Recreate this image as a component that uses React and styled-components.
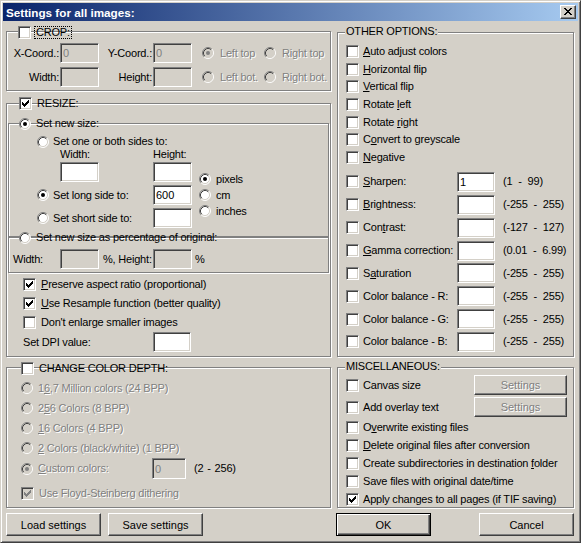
import React from 'react';
import styled, { createGlobalStyle, css } from 'styled-components';

const FACE = '#D4D0C8';
const CHECK_PATH =
  'M3 5h1v3h-1zM4 6h1v3h-1zM5 7h1v3h-1zM6 6h1v3h-1zM7 5h1v3h-1zM8 4h1v3h-1zM9 3h1v3h-1z';
const X_PATH =
  'M0 0h2v1h-2zM6 0h2v1h-2zM1 1h2v1h-2zM5 1h2v1h-2zM2 2h4v1h-4zM3 3h2v1h-2zM2 4h4v1h-4zM1 5h2v1h-2zM5 5h2v1h-2zM0 6h2v1h-2zM6 6h2v1h-2z';

const Global = createGlobalStyle`
  html, body { margin: 0; padding: 0; background: ${FACE}; }
  body {
    font-family: "Liberation Sans", Arial, sans-serif;
    font-size: 11px;
    letter-spacing: -0.2px;
    color: #000;
  }
  * { box-sizing: border-box; }
`;

const Window = styled.div`
  width: 581px;
  height: 543px;
  background: ${FACE};
  border: 1px solid;
  border-color: ${FACE} #404040 #404040 ${FACE};
  box-shadow: inset 1px 1px #fff, inset -1px -1px #808080;
  padding: 2px;
  display: flex;
  flex-direction: column;
`;

const TitleBar = styled.div`
  height: 18px;
  flex: none;
  background: linear-gradient(to right, #0a246a, #a6caf0);
  display: flex;
  align-items: center;
  justify-content: space-between;
  padding: 0 2px 0 3px;
  color: #fff;
  font-weight: bold;
  font-size: 11.7px;
  letter-spacing: 0;
  white-space: nowrap;
`;

const CloseButton = styled.div`
  width: 16px;
  height: 14px;
  background: ${FACE};
  border: 1px solid;
  border-color: #fff #404040 #404040 #fff;
  box-shadow: inset -1px -1px #808080;
  display: flex;
  align-items: center;
  justify-content: center;
  padding: 0 1px 1px 0;
`;

const Body = styled.div`
  flex: 1;
  display: grid;
  grid-template-columns: 325px 237px;
  column-gap: 6px;
  padding-left: 3px;
`;

const Column = styled.div`
  display: flex;
  flex-direction: column;
`;

const Group = styled.div`
  position: relative;
  flex: none;
  height: ${(p) => p.$h}px;
  margin-top: ${(p) => p.$mt || 0}px;
  margin-left: ${(p) => p.$mx || 0}px;
  margin-right: ${(p) => p.$mx || 0}px;
  border: 1px solid #808080;
  box-shadow: inset 1px 1px #fff, 1px 1px #fff;
`;

const Header = styled.div`
  position: absolute;
  left: ${(p) => p.$left}px;
  top: ${(p) => p.$top}px;
  display: flex;
`;

const Legend = styled.div`
  position: absolute;
  left: 7px;
  top: -8px;
  padding: 0 1px;
  background: ${FACE};
  line-height: 13px;
  white-space: nowrap;
`;

const OptionRow = styled.div`
  display: flex;
  align-items: center;
  gap: ${(p) => p.$gap}px;
  height: ${(p) => p.$h || 13}px;
  flex: none;
`;

const Text = styled.span`
  white-space: pre;
  line-height: 13px;
  flex: none;
  word-spacing: ${(p) => (p.$ws ? `${p.$ws}px` : 'normal')};
  width: ${(p) => (p.$w ? `${p.$w}px` : 'auto')};
  text-align: ${(p) => (p.$right ? 'right' : 'left')};
  padding-right: ${(p) => (p.$right ? '1px' : '0')};
  padding-left: ${(p) => p.$pl || 0}px;
  margin-left: ${(p) => p.$ml || 0}px;
  color: ${(p) => (p.$disabled ? '#808080' : '#000')};
  text-shadow: ${(p) => (p.$disabled ? '1px 1px 0 #fff' : 'none')};
  ${(p) =>
    p.$focus &&
    css`
      border: 1px dotted #000;
      line-height: 10px;
      padding: 0 1px 1px;
      margin-left: -2px;
    `}
`;

const CheckBox = styled.span`
  width: 13px;
  height: 13px;
  flex: none;
  display: block;
  background: ${(p) => (p.$disabled ? FACE : '#fff')};
  border: 1px solid;
  border-color: #808080 #fff #fff #808080;
  box-shadow: inset 1px 1px #404040, inset -1px -1px ${FACE};
`;

const Glyph = styled.svg`
  display: block;
  flex: none;
`;

const Field = styled.input`
  width: ${(p) => p.$w}px;
  height: ${(p) => p.$h || 20}px;
  flex: none;
  margin: 0;
  font: inherit;
  font-size: 11px;
  outline: none;
  background: ${(p) => (p.$disabled ? FACE : '#fff')};
  color: ${(p) => (p.$disabled ? '#808080' : '#000')};
  border: 1px solid;
  border-color: #808080 #fff #fff #808080;
  box-shadow: inset 1px 1px #404040, inset -1px -1px ${FACE};
  padding: 0 2px;
`;

const Button = styled.button`
  width: ${(p) => p.$w}px;
  height: ${(p) => p.$h}px;
  flex: none;
  margin: 0;
  margin-left: ${(p) => p.$ml || '0'};
  padding: 0;
  font: inherit;
  font-size: 11px;
  background: ${FACE};
  color: #000;
  border: 1px solid;
  border-color: #fff #404040 #404040 #fff;
  box-shadow: inset -1px -1px #808080, inset 1px 1px ${FACE};
  ${(p) =>
    p.$default &&
    css`
      border-color: #000;
      box-shadow: inset 1px 1px #fff, inset -1px -1px #404040, inset -2px -2px #808080;
    `}
  ${(p) =>
    p.$disabled &&
    css`
      color: #808080;
      text-shadow: 1px 1px 0 #fff;
    `}
`;

const Footer = styled.div`
  display: flex;
  gap: 7px;
  margin-top: 5px;
  margin-left: ${(p) => p.$ml || 0}px;
`;

/* ---------- crop ---------- */
const CropGrid = styled.div`
  display: grid;
  grid-template-columns: 53px 39px 54px 39px 10px 62px auto;
  grid-template-rows: 20px 20px;
  row-gap: 4px;
  padding-top: 11px;
  align-items: center;
`;

/* ---------- resize ---------- */
const SizeGrid = styled.div`
  display: grid;
  grid-template-columns: 23px 93px 39px 7px auto;
  grid-template-rows: 13px 14px 23px 23px 20px;
  padding: 11px 0 0 28px;
  align-items: start;
`;

const Cell = styled.div`
  grid-column: ${(p) => p.$col};
  grid-row: ${(p) => p.$row};
  display: flex;
  align-items: center;
  height: ${(p) => (p.$h ? `${p.$h}px` : 'auto')};
`;

const UnitList = styled.div`
  grid-column: 5;
  grid-row: 3 / 6;
  display: flex;
  flex-direction: column;
  gap: 4px;
  padding-top: 11px;
`;

const PercentRow = styled.div`
  display: grid;
  grid-template-columns: 47px 39px 54px 39px auto;
  align-items: center;
  padding: 11px 0 0 4px;
`;

const ResizeOptions = styled.div`
  display: flex;
  flex-direction: column;
  gap: 6px;
  padding: 5px 0 0 16px;
`;

const DpiRow = styled.div`
  display: flex;
  align-items: center;
  margin-top: -3px;
`;

/* ---------- colour depth ---------- */
const DepthList = styled.div`
  display: flex;
  flex-direction: column;
  padding: 10px 0 0 14px;
`;

const CustomRow = styled.div`
  display: flex;
  align-items: center;
  height: 21px;
  margin-bottom: 4px;
`;

/* ---------- right side ---------- */
const CheckList = styled.div`
  display: flex;
  flex-direction: column;
  gap: ${(p) => p.$gap}px;
  padding: ${(p) => p.$pt || 0}px 0 0 8px;
  margin-top: ${(p) => p.$mt || 0}px;
`;

const ValueGrid = styled.div`
  display: grid;
  grid-template-columns: 111px 38px auto;
  grid-auto-rows: 20px;
  row-gap: 2.86px;
  align-items: center;
  padding-left: 8px;
  margin-top: 8px;
`;

const MiscButtons = styled.div`
  display: flex;
  flex-direction: column;
  gap: 2px;
  padding: 7px 0 0 8px;
`;

const MiscRow = styled.div`
  display: flex;
  align-items: center;
  height: 20px;
`;

/* ---------- controls ---------- */
const RadioIcon = ({ checked, disabled }) => (
  <Glyph width="12" height="12" viewBox="0 0 12 12">
    <circle cx="6" cy="6" r="5" fill={disabled ? FACE : '#fff'} />
    <path d="M2.11 9.89A5.5 5.5 0 0 1 9.89 2.11" stroke="#808080" fill="none" />
    <path d="M9.89 2.11A5.5 5.5 0 0 1 2.11 9.89" stroke="#fff" fill="none" />
    <path d="M2.82 9.18A4.5 4.5 0 0 1 9.18 2.82" stroke="#404040" fill="none" />
    <path d="M9.18 2.82A4.5 4.5 0 0 1 2.82 9.18" stroke={FACE} fill="none" />
    {checked && <circle cx="6" cy="6" r="2" fill={disabled ? '#808080' : '#000'} />}
  </Glyph>
);

const Check = ({ checked, disabled, gap = 4, w, h, focus, children }) => (
  <OptionRow $gap={gap} $h={h}>
    <CheckBox $disabled={disabled}>
      {checked && (
        <Glyph width="11" height="11" viewBox="1 1 11 11" shapeRendering="crispEdges">
          <path d={CHECK_PATH} fill={disabled ? '#808080' : '#000'} />
        </Glyph>
      )}
    </CheckBox>
    <Text $disabled={disabled} $w={w} $focus={focus}>
      {children}
    </Text>
  </OptionRow>
);

const Radio = ({ checked, disabled, gap = 4, w, h, children }) => (
  <OptionRow $gap={gap} $h={h}>
    <RadioIcon checked={checked} disabled={disabled} />
    <Text $disabled={disabled} $w={w}>
      {children}
    </Text>
  </OptionRow>
);

const valueRows = [
  [<><u>S</u>harpen:</>, '1', '(1 - 99)'],
  [<><u>B</u>rightness:</>, '', '(-255 - 255)'],
  [<>Con<u>t</u>rast:</>, '', '(-127 - 127)'],
  [<><u>G</u>amma correction:</>, '', '(0.01 - 6.99)'],
  [<>S<u>a</u>turation</>, '', '(-255 - 255)'],
  [<>Color balance - R:</>, '', '(-255 - 255)'],
  [<>Color balance - G:</>, '', '(-255 - 255)'],
  [<>Color balance - B:</>, '', '(-255 - 255)'],
];

export default function App() {
  return (
    <>
      <Global />
      <Window>
        <TitleBar>
          <span>Settings for all images:</span>
          <CloseButton>
            <Glyph width="8" height="7" viewBox="0 0 8 7" shapeRendering="crispEdges">
              <path d={X_PATH} fill="#000" />
            </Glyph>
          </CloseButton>
        </TitleBar>

        <Body>
          <Column>
            {/* CROP */}
            <Group $h={60} $mt={10}>
              <Header $left={11} $top={-6}>
                <Check gap={5} focus>CROP:</Check>
              </Header>
              <CropGrid>
                <Text $right>X-Coord.:</Text>
                <Field $w={39} $disabled readOnly value="0" />
                <Text $right>Y-Coord.:</Text>
                <Field $w={39} $disabled readOnly value="0" />
                <span />
                <Radio checked disabled gap={6}>Left top</Radio>
                <Radio disabled gap={6}>Right top</Radio>
                <Text $right>Width:</Text>
                <Field $w={39} $disabled readOnly value="" />
                <Text $right>Height:</Text>
                <Field $w={39} $disabled readOnly value="" />
                <span />
                <Radio disabled gap={6}>Left bot.</Radio>
                <Radio disabled gap={6}>Right bot.</Radio>
              </CropGrid>
            </Group>

            {/* RESIZE */}
            <Group $h={254} $mt={12}>
              <Header $left={12} $top={-7}>
                <Check checked gap={5}>RESIZE:</Check>
              </Header>

              <Group $h={114} $mt={19} $mx={1}>
                <Header $left={10} $top={-7}>
                  <Radio checked gap={5}>Set new size:</Radio>
                </Header>
                <SizeGrid>
                  <Cell $col="1 / 5" $row={1}>
                    <Radio>Set one or both sides to:</Radio>
                  </Cell>
                  <Cell $col={2} $row={2}>
                    <Text>Width:</Text>
                  </Cell>
                  <Cell $col={3} $row={2}>
                    <Text>Height:</Text>
                  </Cell>
                  <Cell $col={2} $row={3}>
                    <Field $w={39} readOnly value="" />
                  </Cell>
                  <Cell $col={3} $row={3}>
                    <Field $w={39} readOnly value="" />
                  </Cell>
                  <Cell $col="1 / 3" $row={4} $h={20}>
                    <Radio checked>Set long side to:</Radio>
                  </Cell>
                  <Cell $col={3} $row={4}>
                    <Field $w={39} readOnly value="600" />
                  </Cell>
                  <Cell $col="1 / 3" $row={5} $h={20}>
                    <Radio>Set short side to:</Radio>
                  </Cell>
                  <Cell $col={3} $row={5}>
                    <Field $w={39} readOnly value="" />
                  </Cell>
                  <UnitList>
                    <Radio checked gap={5} h={12}>pixels</Radio>
                    <Radio gap={5} h={12}>cm</Radio>
                    <Radio gap={5} h={12}>inches</Radio>
                  </UnitList>
                </SizeGrid>
              </Group>

              <Group $h={36} $mx={1}>
                <Header $left={10} $top={-7}>
                  <Radio gap={5}>Set new size as percentage of original:</Radio>
                </Header>
                <PercentRow>
                  <Text>Width:</Text>
                  <Field $w={39} $disabled readOnly value="" />
                  <Text $pl={4}>%, Height:</Text>
                  <Field $w={39} $disabled readOnly value="" />
                  <Text $ml={3}>%</Text>
                </PercentRow>
              </Group>

              <ResizeOptions>
                <Check checked gap={5}>
                  <u>P</u>reserve aspect ratio (proportional)
                </Check>
                <Check checked gap={5}>
                  <u>U</u>se Resample function (better quality)
                </Check>
                <Check gap={5}>Don't enlarge smaller images</Check>
                <DpiRow>
                  <Text $w={130}>Set DPI value:</Text>
                  <Field $w={38} readOnly value="" />
                </DpiRow>
              </ResizeOptions>
            </Group>

            {/* COLOR DEPTH */}
            <Group $h={141} $mt={10}>
              <Header $left={14} $top={-6}>
                <Check gap={5}>CHANGE COLOR DEPTH:</Check>
              </Header>
              <DepthList>
                <Radio disabled gap={5} h={20}>
                  1<u>6</u>,7 Million colors (24 BPP)
                </Radio>
                <Radio disabled gap={5} h={20}>
                  2<u>5</u>6 Colors (8 BPP)
                </Radio>
                <Radio disabled gap={5} h={20}>
                  <u>1</u>6 Colors (4 BPP)
                </Radio>
                <Radio disabled gap={5} h={20}>
                  <u>2</u> Colors (black/white) (1 BPP)
                </Radio>
                <CustomRow>
                  <Radio checked disabled gap={5} w={114}>
                    <u>C</u>ustom colors:
                  </Radio>
                  <Field $w={34} $h={21} $disabled readOnly value="0" />
                  <Text $ml={8} $ws={1}>(2 - 256)</Text>
                </CustomRow>
                <Check checked disabled gap={5} h={20}>
                  Use Floyd-Steinberg dithering
                </Check>
              </DepthList>
            </Group>

            <Footer>
              <Button $w={95} $h={23}>Load settings</Button>
              <Button $w={95} $h={23}>Save settings</Button>
            </Footer>
          </Column>

          <Column>
            {/* OTHER OPTIONS */}
            <Group $h={325} $mt={11}>
              <Legend>OTHER OPTIONS:</Legend>
              <CheckList $gap={4.67} $pt={12}>
                <Check><u>A</u>uto adjust colors</Check>
                <Check><u>H</u>orizontal flip</Check>
                <Check><u>V</u>ertical flip</Check>
                <Check>Rotate <u>l</u>eft</Check>
                <Check>Rotate <u>r</u>ight</Check>
                <Check>C<u>o</u>nvert to greyscale</Check>
                <Check><u>N</u>egative</Check>
              </CheckList>
              <ValueGrid>
                {valueRows.map(([label, value, range], i) => (
                  <React.Fragment key={i}>
                    <Check>{label}</Check>
                    <Field $w={38} readOnly value={value} />
                    <Text $ml={8} $ws={3}>{range}</Text>
                  </React.Fragment>
                ))}
              </ValueGrid>
            </Group>

            {/* MISCELLANEOUS */}
            <Group $h={141} $mt={10}>
              <Legend>MISCELLANEOUS:</Legend>
              <MiscButtons>
                <MiscRow>
                  <Check w={111}>Canvas size</Check>
                  <Button $w={93} $h={20} $disabled>Settings</Button>
                </MiscRow>
                <MiscRow>
                  <Check w={111}>Add overlay text</Check>
                  <Button $w={93} $h={20} $disabled>Settings</Button>
                </MiscRow>
              </MiscButtons>
              <CheckList $gap={5} $mt={4}>
                <Check>O<u>v</u>erwrite existing files</Check>
                <Check><u>D</u>elete original files after conversion</Check>
                <Check>Create subdirectories in destination <u>f</u>older</Check>
                <Check>Save files with original date/time</Check>
                <Check checked>Apply changes to all pages (if TIF saving)</Check>
              </CheckList>
            </Group>

            <Footer $ml={-1}>
              <Button $w={95} $h={23} $default>OK</Button>
              <Button $w={95} $h={23} $ml="auto">Cancel</Button>
            </Footer>
          </Column>
        </Body>
      </Window>
    </>
  );
}
